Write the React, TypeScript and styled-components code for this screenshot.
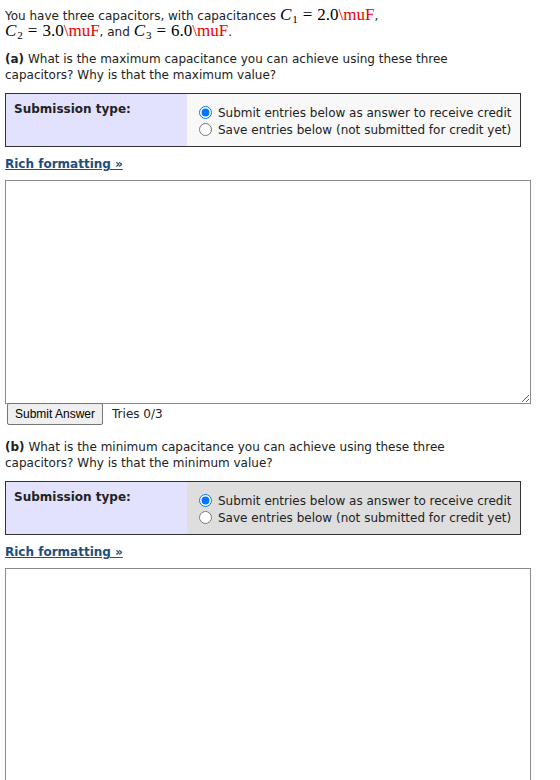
import React from 'react';
import styled, {createGlobalStyle} from "styled-components";

const GlobalStyle = createGlobalStyle`
  body {
    margin: 0;
    background: #ffffff;
    font-family: Verdana, "DejaVu Sans", sans-serif;
    font-size: 12px;
    color: #222222;
  }
`

type Part = {
    label: string
    text: string
    greyed: boolean
}

const parts: Part[] = [
    {label: '(a)', text: 'What is the maximum capacitance you can achieve using these three capacitors? Why is that the maximum value?', greyed: false},
    {label: '(b)', text: 'What is the minimum capacitance you can achieve using these three capacitors? Why is that the minimum value?', greyed: true},
]

const Cap = ({n, value}: { n: number, value: string }) => (
    <MathSpan>
        <Var>C</Var><Sub>{n}</Sub><Eq>=</Eq>{value}<BadMacro>\muF</BadMacro>
    </MathSpan>
)

const Question = ({part, index}: { part: Part, index: number }) => (
    <>
        <Prompt><b>{part.label}</b> {part.text}</Prompt>
        <SubmissionTable>
            <tbody>
            <tr>
                <LabelCell>Submission type:</LabelCell>
                <ChoiceCell greyed={part.greyed}>
                    <Choice>
                        <input type="radio" name={`sub${index}`} defaultChecked/>
                        Submit entries below as answer to receive credit
                    </Choice>
                    <Choice>
                        <input type="radio" name={`sub${index}`}/>
                        Save entries below (not submitted for credit yet)
                    </Choice>
                </ChoiceCell>
            </tr>
            </tbody>
        </SubmissionTable>
        <RichLink href="#">Rich formatting »</RichLink>
        <AnswerBox/>
        {index === 0 && (
            <Actions>
                <SubmitButton>Submit Answer</SubmitButton>
                <span>Tries 0/3</span>
            </Actions>
        )}
    </>
)

const App = () => (
    <Page>
        <GlobalStyle/>
        <Intro>
            You have three capacitors, with capacitances <Cap n={1} value="2.0"/>,{' '}
            <Cap n={2} value="3.0"/>, and <Cap n={3} value="6.0"/>.
        </Intro>
        {parts.map((p, i) => <Question part={p} index={i} key={p.label}/>)}
    </Page>
)

const Page = styled.div`
  padding: 8px 5px 0 5px;
  width: 525px;
`
const Intro = styled.p`
  margin: 0;
  line-height: 16px;
  width: 460px;
`
const MathSpan = styled.span`
  font-family: "Liberation Serif", "DejaVu Serif", serif;
  font-size: 17px;
  line-height: 0;
  color: #000;
  white-space: nowrap;
`
const Var = styled.i`
  margin-right: 1px;
`
const Sub = styled.sub`
  font-size: 11px;
  line-height: 0;
  vertical-align: -3px;
`
const Eq = styled.span`
  margin: 0 5px;
`
const BadMacro = styled.span`
  color: #ee0000;
`
const Prompt = styled.p`
  margin: 11px 0 10px 0;
  line-height: 16px;
  width: 460px;
`
const SubmissionTable = styled.table`
  border: 1px solid #333;
  border-collapse: collapse;
`
const LabelCell = styled.td`
  background: #e2e2ff;
  width: 165px;
  padding: 8px;
  vertical-align: top;
  font-weight: bold;
`
const ChoiceCell = styled.td<{ greyed: boolean }>`
  background: ${({greyed}) => greyed ? '#dedede' : '#f8f8f8'};
  padding: 10px 8px 8px 12px;
`
const Choice = styled.label`
  display: flex;
  align-items: center;
  height: 17px;
  gap: 6px;

  input {
    margin: 0;
    width: 13px;
    height: 13px;
  }
`
const RichLink = styled.a`
  display: inline-block;
  margin: 10px 0 9px 0;
  font-weight: bold;
  color: #1f4e79;
`
const AnswerBox = styled.textarea`
  display: block;
  box-sizing: border-box;
  width: 526px;
  height: 224px;
  margin: 0;
  border: 1px solid #8a8a8a;
`
const Actions = styled.div`
  display: flex;
  align-items: center;
  gap: 9px;
  margin: -1px 0 14px 0;
`
const SubmitButton = styled.button`
  margin: 0 0 0 2px;
  font-family: Arial, "Liberation Sans", sans-serif;
  font-size: 12px;
  padding: 3px 7px 3px 7px;
  background: #efefef;
  border: 1px solid #767676;
  border-radius: 2px;
`

export default App;
